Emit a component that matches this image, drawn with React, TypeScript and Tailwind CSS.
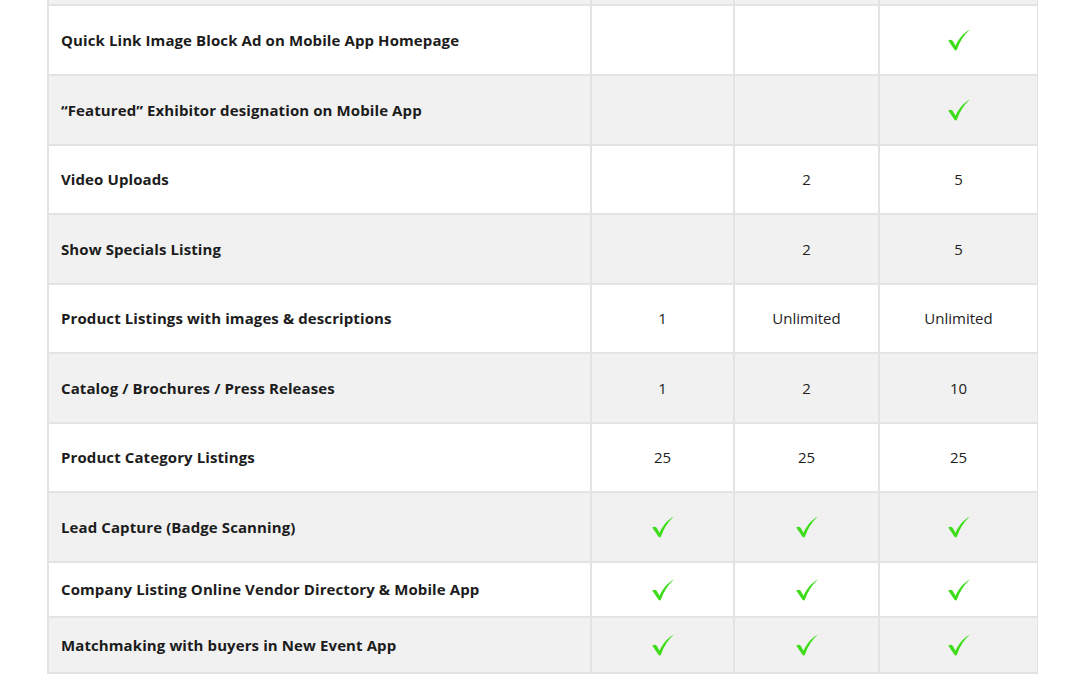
import React from 'react';

type Cell = string | boolean | null;

const rows: { label: string; cells: Cell[]; h: string }[] = [
  { label: 'Quick Link Image Block Ad on Mobile App Homepage', cells: [null, null, true], h: 'h-[68px]' },
  { label: '\u201cFeatured\u201d Exhibitor designation on Mobile App', cells: [null, null, true], h: 'h-[68px]' },
  { label: 'Video Uploads', cells: [null, '2', '5'], h: 'h-[67px]' },
  { label: 'Show Specials Listing', cells: [null, '2', '5'], h: 'h-[68px]' },
  { label: 'Product Listings with images & descriptions', cells: ['1', 'Unlimited', 'Unlimited'], h: 'h-[67px]' },
  { label: 'Catalog / Brochures / Press Releases', cells: ['1', '2', '10'], h: 'h-[68px]' },
  { label: 'Product Category Listings', cells: ['25', '25', '25'], h: 'h-[67px]' },
  { label: 'Lead Capture (Badge Scanning)', cells: [true, true, true], h: 'h-[68px]' },
  { label: 'Company Listing Online Vendor Directory & Mobile App', cells: [true, true, true], h: 'h-[53px]' },
  { label: 'Matchmaking with buyers in New Event App', cells: [true, true, true], h: 'h-[54px]' },
];

const Check = () => (
  <svg width="24" height="22" viewBox="0 0 24 22">
    <path
      d="M1.2 11.6 C3.5 10.2 5.2 10.8 6.4 13 L8.5 16.8 C11.5 10.2 16 4.4 22.8 0.6 C17 6 12.8 12.6 10 20.6 C9.5 21.7 8.1 21.8 7.5 20.8 Z"
      fill="#3fdc1c"
    />
  </svg>
);

export default function App() {
  return (
    <div className="w-[1080px] h-[675px] overflow-hidden bg-white pl-[47px]" style={{ fontFamily: '"Open Sans", "Liberation Sans", sans-serif' }}>
      <div className="w-[991px] bg-[#e3e3e3] p-[2px] pt-0 grid grid-cols-[541px_141px_143px_157px] gap-[2px]">
        <div className="h-[4px] bg-[#f1f1f1]" />
        <div className="h-[4px] bg-[#f1f1f1]" />
        <div className="h-[4px] bg-[#f1f1f1]" />
        <div className="h-[4px] bg-[#f1f1f1]" />
        {rows.map((row, i) => {
          const bg = i % 2 === 0 ? 'bg-white' : 'bg-[#f1f1f1]';
          return (
            <React.Fragment key={row.label}>
              <div className={`${row.h} ${bg} flex items-center pl-[12px] text-[15px] font-bold text-[#1c1c1c] tracking-[0.1px]`}>
                {row.label}
              </div>
              {row.cells.map((c, j) => (
                <div key={j} className={`${row.h} ${bg} flex items-center justify-center text-[15px] font-medium text-[#222]`}>
                  {c === true ? <Check /> : c}
                </div>
              ))}
            </React.Fragment>
          );
        })}
      </div>
    </div>
  );
}
